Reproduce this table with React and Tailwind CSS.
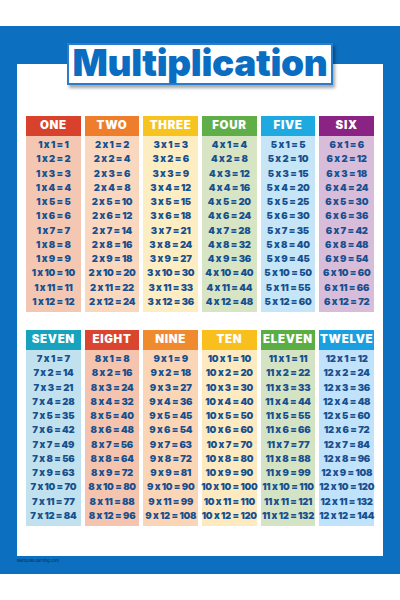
import React from "react";

const topRow = [
  { n: 1, name: "ONE", head: "bg-[#d8412c]", body: "bg-[#f4c7b3]" },
  { n: 2, name: "TWO", head: "bg-[#ee7e2c]", body: "bg-[#fad8bf]" },
  { n: 3, name: "THREE", head: "bg-[#f7c41f]", body: "bg-[#fdedc3]" },
  { n: 4, name: "FOUR", head: "bg-[#5fae47]", body: "bg-[#d7e5c4]" },
  { n: 5, name: "FIVE", head: "bg-[#1ea9e1]", body: "bg-[#c6e5f6]" },
  { n: 6, name: "SIX", head: "bg-[#8b2384]", body: "bg-[#d8bdda]" },
];

const bottomRow = [
  { n: 7, name: "SEVEN", head: "bg-[#17a3bd]", body: "bg-[#c0e1ed]" },
  { n: 8, name: "EIGHT", head: "bg-[#d9452f]", body: "bg-[#f4c4ae]" },
  { n: 9, name: "NINE", head: "bg-[#f08a2f]", body: "bg-[#fbd6b6]" },
  { n: 10, name: "TEN", head: "bg-[#f8bf1d]", body: "bg-[#fdeac1]" },
  { n: 11, name: "ELEVEN", head: "bg-[#5bad46]", body: "bg-[#d5e3c5]" },
  { n: 12, name: "TWELVE", head: "bg-[#1b9fe1]", body: "bg-[#c0e2fa]" },
];

const times = [1, 2, 3, 4, 5, 6, 7, 8, 9, 10, 11, 12];

function Column({ col }) {
  return (
    <div className="flex flex-col">
      <div
        className={`${col.head} h-[20px] flex items-center justify-center text-white text-[11.5px] font-black tracking-[0.06em]`}
      >
        {col.name}
      </div>
      <div className={`${col.body} flex flex-col pt-[2px] pb-[3px]`}>
        {times.map((t) => (
          <div
            key={t}
            className="h-[14.25px] flex items-center justify-center whitespace-nowrap text-[9.5px] font-black tracking-[-0.03em] text-[#17508f]"
          >
            {col.n} x {t} = {col.n * t}
          </div>
        ))}
      </div>
    </div>
  );
}

export default function App() {
  return (
    <div
      className="w-[400px] h-[600px] bg-white pt-[26px]"
      style={{ fontFamily: "Inter, 'Liberation Sans', sans-serif" }}
    >
      <div className="bg-[#0c6fbf] h-[548px] px-[17px] pt-[38px] flex flex-col">
        <div className="bg-white h-[492px] flex flex-col items-center px-[9px]">
          <div className="-mt-[21px] w-[266px] h-[42px] bg-white border-2 border-[#2a7dca] shadow-[2px_3px_3px_rgba(0,0,0,0.35)] flex items-center justify-center">
            <span className="text-[37px] leading-none font-black tracking-[-0.01em] text-[#0b6dc1] -mt-[3px]">
              Multiplication
            </span>
          </div>
          <div className="w-full grid grid-cols-6 gap-x-[4px] mt-[31px]">
            {topRow.map((c) => (
              <Column key={c.n} col={c} />
            ))}
          </div>
          <div className="w-full grid grid-cols-6 gap-x-[4px] mt-[18px]">
            {bottomRow.map((c) => (
              <Column key={c.n} col={c} />
            ))}
          </div>
        </div>
        <div className="text-[4px] leading-none text-[#0a2a4a] mt-[3px]">
          RainbowLearning.com
        </div>
      </div>
    </div>
  );
}
